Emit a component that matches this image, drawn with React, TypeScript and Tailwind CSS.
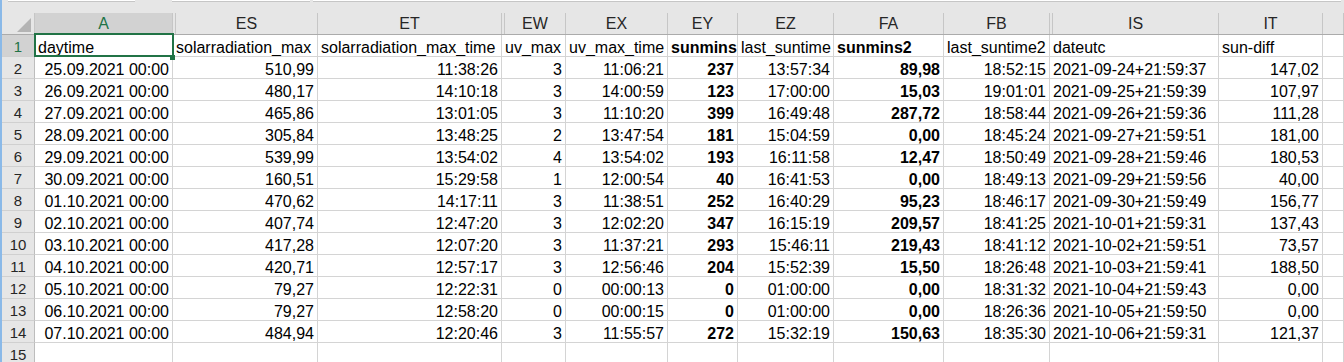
const HEAD = ["A", "ES", "ET", "EW", "EX", "EY", "EZ", "FA", "FB", "IS", "IT", ""];
const HIDDEN_BEFORE = ["ES", "EW", "IS"];
const BOLD = [5, 7];
const ALIGN = ["r", "r", "r", "r", "r", "r", "r", "r", "r", "l", "r", "l"];

const FIELDS = [
  "daytime",
  "solarradiation_max",
  "solarradiation_max_time",
  "uv_max",
  "uv_max_time",
  "sunmins",
  "last_suntime",
  "sunmins2",
  "last_suntime2",
  "dateutc",
  "sun-diff",
  "",
];

const ROWS: string[][] = [
  ["25.09.2021 00:00", "510,99", "11:38:26", "3", "11:06:21", "237", "13:57:34", "89,98", "18:52:15", "2021-09-24+21:59:37", "147,02"],
  ["26.09.2021 00:00", "480,17", "14:10:18", "3", "14:00:59", "123", "17:00:00", "15,03", "19:01:01", "2021-09-25+21:59:39", "107,97"],
  ["27.09.2021 00:00", "465,86", "13:01:05", "3", "11:10:20", "399", "16:49:48", "287,72", "18:58:44", "2021-09-26+21:59:36", "111,28"],
  ["28.09.2021 00:00", "305,84", "13:48:25", "2", "13:47:54", "181", "15:04:59", "0,00", "18:45:24", "2021-09-27+21:59:51", "181,00"],
  ["29.09.2021 00:00", "539,99", "13:54:02", "4", "13:54:02", "193", "16:11:58", "12,47", "18:50:49", "2021-09-28+21:59:46", "180,53"],
  ["30.09.2021 00:00", "160,51", "15:29:58", "1", "12:00:54", "40", "16:41:53", "0,00", "18:49:13", "2021-09-29+21:59:56", "40,00"],
  ["01.10.2021 00:00", "470,62", "14:17:11", "3", "11:38:51", "252", "16:40:29", "95,23", "18:46:17", "2021-09-30+21:59:49", "156,77"],
  ["02.10.2021 00:00", "407,74", "12:47:20", "3", "12:02:20", "347", "16:15:19", "209,57", "18:41:25", "2021-10-01+21:59:31", "137,43"],
  ["03.10.2021 00:00", "417,28", "12:07:20", "3", "11:37:21", "293", "15:46:11", "219,43", "18:41:12", "2021-10-02+21:59:51", "73,57"],
  ["04.10.2021 00:00", "420,71", "12:57:17", "3", "12:56:46", "204", "15:52:39", "15,50", "18:26:48", "2021-10-03+21:59:41", "188,50"],
  ["05.10.2021 00:00", "79,27", "12:22:31", "0", "00:00:13", "0", "01:00:00", "0,00", "18:31:32", "2021-10-04+21:59:43", "0,00"],
  ["06.10.2021 00:00", "79,27", "12:58:20", "0", "00:00:15", "0", "01:00:00", "0,00", "18:26:36", "2021-10-05+21:59:50", "0,00"],
  ["07.10.2021 00:00", "484,94", "12:20:46", "3", "11:55:57", "272", "15:32:19", "150,63", "18:35:30", "2021-10-06+21:59:31", "121,37"],
];

const GRID =
  "grid grid-cols-[33px_138px_145px_184px_64px_102px_70px_96px_110px_106px_169px_104px_1fr]";

function Cell({ text, col, header }: { text: string; col: number; header?: boolean }) {
  const right = !header && ALIGN[col] === "r";
  const bold = BOLD.includes(col);
  return (
    <div
      className={`h-[22px] border-r border-b border-[#d4d4d4] px-[3px] flex items-end overflow-hidden whitespace-nowrap text-[16px] leading-[16px] text-black ${
        right ? "justify-end" : "justify-start"
      } ${bold ? "font-bold" : ""}`}
    >
      {text}
    </div>
  );
}

export default function App() {
  return (
    <div className="w-[1344px] h-[362px] overflow-hidden bg-white border-l-2 border-[#8ab9e8] font-['Liberation_Sans',Arial,sans-serif]">
      {/* formula bar edge */}
      <div className="h-[13px] bg-[#e6e6e6]">
        <div className="flex h-[2px]">
          <div className="ml-[6px] w-[127px] bg-white border-b border-[#c6c6c6]" />
          <div className="ml-[37px] w-[138px] bg-white border-b border-[#c6c6c6]" />
          <div className="ml-[3px] mr-[3px] flex-1 bg-white border-b border-[#c6c6c6]" />
        </div>
      </div>

      {/* column headers */}
      <div className={`${GRID} h-[22px] bg-[#e6e6e6] border-b border-[#ababab]`}>
        <div className="border-r border-[#c6c6c6] flex items-end justify-end pr-[3px] pb-[2px]">
          <svg width="14" height="14" viewBox="0 0 14 14">
            <polygon points="14,0 14,14 0,14" fill="#b4b4b4" />
          </svg>
        </div>
        {HEAD.map((h, i) => (
          <div
            key={i}
            className={`h-full border-r border-[#c6c6c6] flex items-end justify-center text-[16px] leading-[16px] pb-[2px] ${
              HIDDEN_BEFORE.includes(h) ? "ml-[2px] border-l" : ""
            } ${i === 0 ? "bg-[#d2d2d2] text-[#217346]" : "text-[#262626]"}`}
          >
            {h}
          </div>
        ))}
      </div>

      {/* rows */}
      {[FIELDS, ...ROWS, []].map((row, r) => (
        <div key={r} className={GRID}>
          <div
            className={`h-[22px] border-r border-b border-r-[#bdbdbd] border-b-[#d0d0d0] flex items-center justify-center pt-px text-[15px] leading-[21px] ${
              r === 0 ? "bg-[#d2d2d2] text-[#217346]" : "bg-[#e6e6e6] text-[#262626]"
            }`}
          >
            {r + 1}
          </div>
          {HEAD.map((_, c) =>
            r === 0 && c === 0 ? (
              <div key={c} className="relative h-[22px] border-r border-b border-[#d4d4d4] px-[3px] flex items-end text-[16px] leading-[16px]">
                {row[c]}
                <div className="absolute -top-[2px] -left-px -right-[2px] -bottom-px border-2 border-[#217346] z-10" />
                <div className="absolute -right-[3px] -bottom-[4px] w-[5px] h-[5px] bg-[#217346] z-10" />
              </div>
            ) : (
              <Cell key={c} text={row[c] ?? ""} col={c} header={r === 0} />
            )
          )}
        </div>
      ))}
    </div>
  );
}
